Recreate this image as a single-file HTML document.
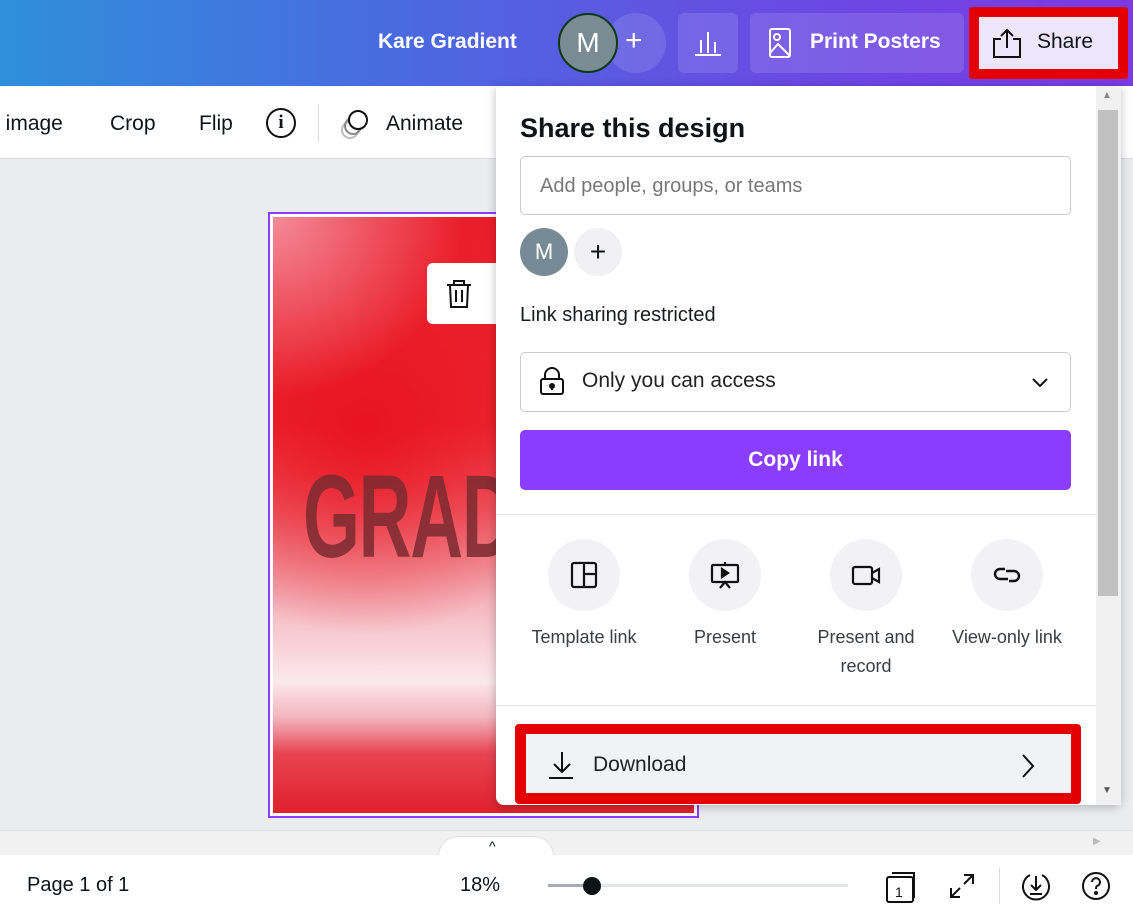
<!DOCTYPE html>
<html><head><meta charset="utf-8"><style>
*{box-sizing:border-box;margin:0;padding:0}
body{width:1133px;height:914px;overflow:hidden;font-family:"Liberation Sans",sans-serif;background:#ebecf0;position:relative;color:#0e1318}
.abs{position:absolute}
.top{left:0;top:0;width:1133px;height:86px;background:linear-gradient(90deg,#2f8fdb 0%,#4a6ae0 35%,#6a4ae3 70%,#7b3ae2 100%)}
.tb{left:0;top:86px;width:1133px;height:73px;background:#fff;border-bottom:1px solid #dcdde2}
.tbt{font-size:21px;top:112px}
.bot{left:0;top:855px;width:1133px;height:59px;background:#fff}
.strip{left:0;top:830px;width:1133px;height:25px;background:#f1f1f2;border-top:1px solid #e2e2e4}
.panel{left:496px;top:86px;width:625px;height:719px;background:#fff;border-radius:0 0 8px 8px;box-shadow:0 2px 10px rgba(0,0,0,.25)}
.circ{width:72px;height:72px;border-radius:50%;background:#f2f2f4;display:flex;align-items:center;justify-content:center}
.lbl{font-size:18px;color:#3a3d42;text-align:center;line-height:29px}
</style></head><body>
<div class="abs top"></div>
<div class="abs" style="left:378px;top:30px;color:#fff;font-weight:bold;font-size:21px">Kare Gradient</div>
<div class="abs" style="left:606px;top:13px;width:60px;height:60px;border-radius:50%;background:rgba(255,255,255,.12)"></div>
<div class="abs" style="left:625px;top:24px;color:#fff;font-size:30px">+</div>
<div class="abs" style="left:558px;top:13px;width:60px;height:60px;border-radius:50%;background:#7a8b94;border:2px solid #0b3a12;color:#fff;font-size:28px;display:flex;align-items:center;justify-content:center">M</div>
<div class="abs" style="left:678px;top:13px;width:60px;height:60px;border-radius:6px;background:rgba(255,255,255,.12)"></div>
<svg class="abs" style="left:692px;top:28px" width="32" height="30" fill="none" stroke="#fff" stroke-width="2"><path d="M3 27h26M9 25V12M16 25V4M23 25V14"/></svg>
<div class="abs" style="left:750px;top:13px;width:214px;height:60px;border-radius:6px;background:rgba(255,255,255,.12)"></div>
<svg class="abs" style="left:768px;top:27px" width="24" height="32" fill="none" stroke="#fff" stroke-width="2"><rect x="2" y="2" width="20" height="28" rx="2"/><circle cx="9" cy="10" r="3"/><path d="M2 26l8-9 12 12"/></svg>
<div class="abs" style="left:810px;top:30px;color:#fff;font-weight:bold;font-size:21px">Print Posters</div>
<div class="abs" style="left:969px;top:7px;width:159px;height:72px;background:#e40000;border-radius:3px"></div>
<div class="abs" style="left:979px;top:17px;width:139px;height:52px;background:#ede6fb"></div>
<svg class="abs" style="left:991px;top:27px" width="32" height="32" fill="none" stroke="#111" stroke-width="2"><path d="M10 12H3v18h26V12h-7M16 21V3M10 9l6-6 6 6"/></svg>
<div class="abs" style="left:1037px;top:30px;font-size:21px">Share</div>

<div class="abs tb"></div>
<div class="abs tbt" style="left:-6px">t image</div>
<div class="abs tbt" style="left:110px">Crop</div>
<div class="abs tbt" style="left:199px">Flip</div>
<div class="abs" style="left:266px;top:108px;width:30px;height:30px;border:2px solid #111;border-radius:50%;text-align:center;font-size:19px;font-weight:bold;line-height:26px;font-family:'Liberation Serif',serif">i</div>
<div class="abs" style="left:318px;top:104px;width:1px;height:38px;background:#ddd"></div>
<svg class="abs" style="left:338px;top:106px" width="34" height="34" fill="none" stroke-width="2"><circle cx="12" cy="24" r="8" stroke="#bbb"/><circle cx="15" cy="20" r="8" stroke="#888"/><circle cx="20" cy="14" r="9" stroke="#111" fill="#fff"/></svg>
<div class="abs tbt" style="left:386px">Animate</div>

<div class="abs" style="left:268px;top:212px;width:431px;height:606px;border:2px solid #8b3dff;padding:3px;background:#fff">
<div style="width:100%;height:100%;position:relative;overflow:hidden;background:radial-gradient(ellipse 45% 30% at 0% 0%,rgba(245,150,165,.9) 0%,transparent 100%),radial-gradient(ellipse 55% 35% at 22% 35%,#e8141f 0%,transparent 100%),linear-gradient(180deg,#ea1d2a 0%,#ec2a36 35%,#f08a94 55%,#f6c4ca 68%,#fbe8ec 78%,#f3b5bd 84%,#e84452 90%,#e0202c 100%)">
<div style="position:absolute;left:30px;top:232px;font-family:'Liberation Sans';font-weight:bold;font-size:118px;color:#7c2a30;opacity:.85;transform:scaleX(.62);transform-origin:left;letter-spacing:-2px">GRADIENT</div>
</div></div>
<div class="abs" style="left:427px;top:263px;width:80px;height:61px;background:#fff;border-radius:6px"></div>
<svg class="abs" style="left:445px;top:279px" width="28" height="30" fill="none" stroke="#111" stroke-width="2"><path d="M2 6h24M9 6V2h10v4M5 6l1 22h16l1-22M11 11v12M17 11v12"/></svg>

<div class="abs strip"></div>
<div class="abs" style="left:438px;top:836px;width:116px;height:22px;background:#fff;border-radius:20px 20px 0 0;border:1px solid #e0e0e0;border-bottom:none"></div>
<div class="abs" style="left:489px;top:838px;font-size:14px">^</div>
<div class="abs" style="left:1093px;top:836px;font-size:10px;color:#bbb">▶</div>
<div class="abs bot"></div>
<div class="abs" style="left:27px;top:874px;font-size:20px">Page 1 of 1</div>
<div class="abs" style="left:460px;top:874px;font-size:20px">18%</div>
<div class="abs" style="left:548px;top:884px;width:300px;height:3px;background:#e4e5e8"></div>
<div class="abs" style="left:548px;top:884px;width:40px;height:3px;background:#a8acb2"></div>
<div class="abs" style="left:583px;top:877px;width:18px;height:18px;border-radius:50%;background:#0e1318"></div>
<svg class="abs" style="left:884px;top:870px" width="36" height="34" fill="none" stroke="#111" stroke-width="2"><rect x="3" y="7" width="26" height="25" rx="2"/><path d="M8 3h22v25"/><text x="11" y="27" font-size="14" fill="#111" stroke="none" font-family="Liberation Sans">1</text></svg>
<svg class="abs" style="left:948px;top:872px" width="28" height="28" fill="none" stroke="#111" stroke-width="2"><path d="M16 3h9v9M25 3l-9 9M3 16v9h9M3 25l9-9"/></svg>
<div class="abs" style="left:999px;top:868px;width:1px;height:36px;background:#ddd"></div>
<svg class="abs" style="left:1020px;top:870px" width="32" height="32" fill="none" stroke="#111" stroke-width="2"><path d="M10 5a13 13 0 1 0 12 0M16 6v14M11 15l5 5 5-5M10 24h12"/></svg>
<svg class="abs" style="left:1080px;top:870px" width="32" height="32" fill="none" stroke="#111" stroke-width="2"><circle cx="16" cy="16" r="13"/><path d="M12 12a4 4 0 1 1 5 4c-1 .5-1 1.5-1 3"/><circle cx="16" cy="23" r="1" fill="#111"/></svg>

<div class="abs panel"></div>
<div class="abs" style="left:1096px;top:86px;width:25px;height:719px;background:#f1f1f1"></div>
<div class="abs" style="left:1098px;top:110px;width:20px;height:486px;background:#c1c1c1"></div>
<div class="abs" style="left:1102px;top:90px;font-size:10px;color:#888">▲</div>
<div class="abs" style="left:1102px;top:785px;font-size:10px;color:#555">▼</div>
<div class="abs" style="left:520px;top:113px;font-size:27px;font-weight:bold">Share this design</div>
<div class="abs" style="left:520px;top:156px;width:551px;height:59px;border:1px solid #c9cbd0;border-radius:5px;padding:18px 19px;font-size:20px;color:#777">Add people, groups, or teams</div>
<div class="abs" style="left:520px;top:228px;width:48px;height:48px;border-radius:50%;background:#768b96;color:#fff;font-size:22px;display:flex;align-items:center;justify-content:center">M</div>
<div class="abs" style="left:574px;top:228px;width:48px;height:48px;border-radius:50%;background:#f0f0f2;font-size:28px;display:flex;align-items:center;justify-content:center">+</div>
<div class="abs" style="left:520px;top:304px;font-size:20px;color:#1a1c20">Link sharing restricted</div>
<div class="abs" style="left:520px;top:352px;width:551px;height:60px;border:1px solid #c9cbd0;border-radius:5px"></div>
<svg class="abs" style="left:538px;top:366px" width="28" height="30" fill="none" stroke="#111" stroke-width="2"><path d="M7 13V9a7 7 0 0 1 14 0v4"/><rect x="3" y="13" width="22" height="15" rx="2"/><circle cx="14" cy="20" r="2" fill="#111"/><path d="M14 20v4"/></svg>
<div class="abs" style="left:582px;top:369px;font-size:21px;color:#222">Only you can access</div>
<svg class="abs" style="left:1030px;top:375px" width="20" height="14" fill="none" stroke="#111" stroke-width="2"><path d="M3 4l7 7 7-7"/></svg>
<div class="abs" style="left:520px;top:430px;width:551px;height:60px;background:#8b3dff;border-radius:5px;color:#fff;font-weight:bold;font-size:21px;text-align:center;line-height:60px">Copy link</div>
<div class="abs" style="left:496px;top:514px;width:600px;height:1px;background:#e6e6e8"></div>
<div class="abs circ" style="left:548px;top:539px"><svg width="30" height="30" fill="none" stroke="#111" stroke-width="2.2"><rect x="3" y="3" width="24" height="24" rx="2"/><path d="M15 3v24M15 14h12"/></svg></div>
<div class="abs circ" style="left:689px;top:539px"><svg width="30" height="30" fill="none" stroke="#111" stroke-width="2.2"><rect x="2" y="5" width="26" height="17" rx="1"/><path d="M15 2v3M10 28l5-6 5 6"/><path d="M12 9l6 4-6 4z" fill="#111"/></svg></div>
<div class="abs circ" style="left:830px;top:539px"><svg width="32" height="30" fill="none" stroke="#111" stroke-width="2.2"><rect x="3" y="7" width="19" height="17" rx="2"/><path d="M22 13l7-4v13l-7-4"/></svg></div>
<div class="abs circ" style="left:971px;top:539px"><svg width="32" height="30" fill="none" stroke="#111" stroke-width="2.4"><path d="M14 9h-5a5 5 0 0 0 0 10h8M18 21h5a5 5 0 0 0 0-10h-8"/></svg></div>
<div class="abs lbl" style="left:514px;top:623px;width:140px">Template link</div>
<div class="abs lbl" style="left:655px;top:623px;width:140px">Present</div>
<div class="abs lbl" style="left:796px;top:623px;width:140px">Present and<br>record</div>
<div class="abs lbl" style="left:937px;top:623px;width:140px">View-only link</div>
<div class="abs" style="left:496px;top:705px;width:600px;height:1px;background:#e6e6e8"></div>
<div class="abs" style="left:515px;top:724px;width:566px;height:80px;background:#e40000;border-radius:4px"></div>
<div class="abs" style="left:526px;top:734px;width:545px;height:59px;background:#f1f2f4"></div>
<svg class="abs" style="left:546px;top:750px" width="32" height="30" fill="none" stroke="#111" stroke-width="2"><path d="M16 2v20M8 14l8 8 8-8M3 28h24"/></svg>
<div class="abs" style="left:593px;top:753px;font-size:21px;color:#222">Download</div>
<svg class="abs" style="left:1018px;top:752px" width="20" height="28" fill="none" stroke="#111" stroke-width="2"><path d="M5 3l10 11-10 11"/></svg>
</body></html>
